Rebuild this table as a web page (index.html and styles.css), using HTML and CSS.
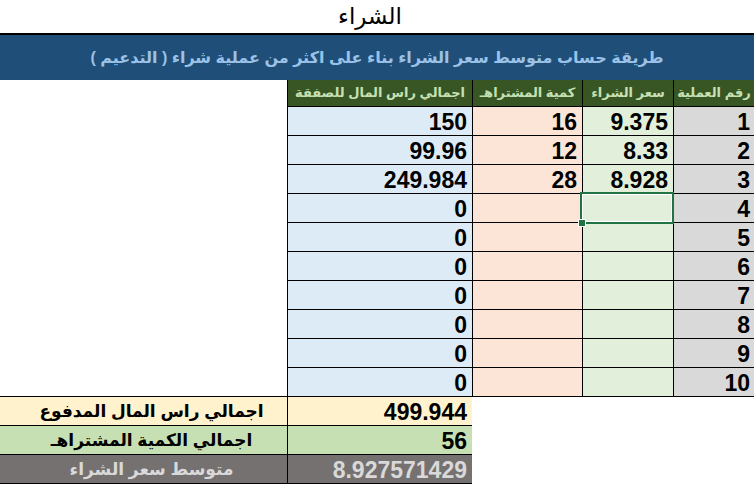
FILE: index.html
```html
<!DOCTYPE html>
<html lang="ar" dir="rtl">
<head>
<meta charset="utf-8">
<title>الشراء</title>
<link rel="stylesheet" href="styles.css">
</head>
<body>
<div class="sheet">
  <div class="title">الشراء</div>
  <div class="band">طريقة حساب متوسط سعر الشراء بناء على اكثر من عملية شراء ( التدعيم )</div>
  <div class="grid">
    <div class="c hd">رقم العملية</div>
    <div class="c hd">سعر الشراء</div>
    <div class="c hd">كمية المشتراهـ</div>
    <div class="c hd">اجمالي راس المال للصفقة</div>
    <div class="blank"></div>

    <div class="c num">1</div><div class="c price">9.375</div><div class="c qty">16</div><div class="c cap">150</div><div class="blank"></div>
    <div class="c num">2</div><div class="c price">8.33</div><div class="c qty">12</div><div class="c cap">99.96</div><div class="blank"></div>
    <div class="c num">3</div><div class="c price">8.928</div><div class="c qty">28</div><div class="c cap">249.984</div><div class="blank"></div>
    <div class="c num">4</div><div class="c price selected"><span class="sel"><span class="handle"></span></span></div><div class="c qty"></div><div class="c cap">0</div><div class="blank"></div>
    <div class="c num">5</div><div class="c price"></div><div class="c qty"></div><div class="c cap">0</div><div class="blank"></div>
    <div class="c num">6</div><div class="c price"></div><div class="c qty"></div><div class="c cap">0</div><div class="blank"></div>
    <div class="c num">7</div><div class="c price"></div><div class="c qty"></div><div class="c cap">0</div><div class="blank"></div>
    <div class="c num">8</div><div class="c price"></div><div class="c qty"></div><div class="c cap">0</div><div class="blank"></div>
    <div class="c num">9</div><div class="c price"></div><div class="c qty"></div><div class="c cap">0</div><div class="blank"></div>
    <div class="c num">10</div><div class="c price"></div><div class="c qty"></div><div class="c cap">0</div><div class="blank last"></div>

    <div class="c val paid">499.944</div><div class="lab paid">اجمالي راس المال المدفوع</div>
    <div class="c val total">56</div><div class="lab total">اجمالي الكمية المشتراهـ</div>
    <div class="c val avg">8.927571429</div><div class="lab avg">متوسط سعر الشراء</div>
  </div>
</div>
</body>
</html>
```

FILE: styles.css
```css
html, body {
  margin: 0;
  padding: 0;
  background: #ffffff;
}

.sheet {
  width: 754px;
  overflow: hidden;
  font-family: "Liberation Sans", "DejaVu Sans", sans-serif;
  color: #000;
}

.title {
  height: 33px;
  border-bottom: 2px solid #000;
  display: flex;
  align-items: center;
  justify-content: center;
  font-size: 23px;
  padding-right: 14px;
}

.band {
  height: 45px;
  background: #1f4e78;
  color: #9bc2e6;
  font-weight: bold;
  font-size: 16px;
  display: flex;
  align-items: center;
  justify-content: center;
}

.grid {
  display: grid;
  grid-template-columns: 81px 91px 110px 185px 287px;
  grid-auto-flow: row;
}

.c {
  box-sizing: border-box;
  height: 29px;
  border-left: 1px solid #000;
  border-bottom: 1px solid #000;
  display: flex;
  align-items: flex-end;
  justify-content: flex-end;
  padding: 0 5px 1px 5px;
  font-weight: bold;
  font-size: 23px;
  line-height: 23px;
  direction: ltr;
  white-space: nowrap;
}

.hd {
  height: 27px;
  background: #375623;
  color: #c6e0b4;
  font-size: 13px;
  line-height: 16px;
  align-items: center;
  justify-content: center;
  padding: 0 2px;
  direction: rtl;
  overflow: hidden;
}

.blank {
  height: 29px;
}
.grid > .blank:nth-child(5) {
  height: 27px;
}
.blank.last {
  border-bottom: 1px solid #000;
  box-sizing: border-box;
}

.num { background: #d9d9d9; padding-right: 4px; }
.price { background: #e2efda; }
.qty { background: #fce4d6; }
.cap { background: #ddebf7; }

.selected { position: relative; }
.sel {
  position: absolute;
  left: -3px;
  top: -2px;
  width: 94px;
  height: 32px;
  box-sizing: border-box;
  border: 2px solid #217346;
  box-shadow: inset 0 0 0 1px #ffffff;
}
.handle {
  position: absolute;
  left: -3px;
  bottom: -4px;
  width: 6px;
  height: 6px;
  background: #217346;
  box-sizing: border-box;
  outline: 1px solid #ffffff;
}

.val { grid-column: 4; }
.lab {
  grid-column: 5;
  box-sizing: border-box;
  height: 29px;
  border-bottom: 1px solid #000;
  display: flex;
  align-items: center;
  justify-content: center;
  padding-left: 16px;
  font-weight: bold;
  font-size: 17px;
  white-space: nowrap;
}

.paid { background: #fff2cc; }
.total { background: #c6e0b4; }
.avg { background: #757171; color: #d9d9d9; }
```
